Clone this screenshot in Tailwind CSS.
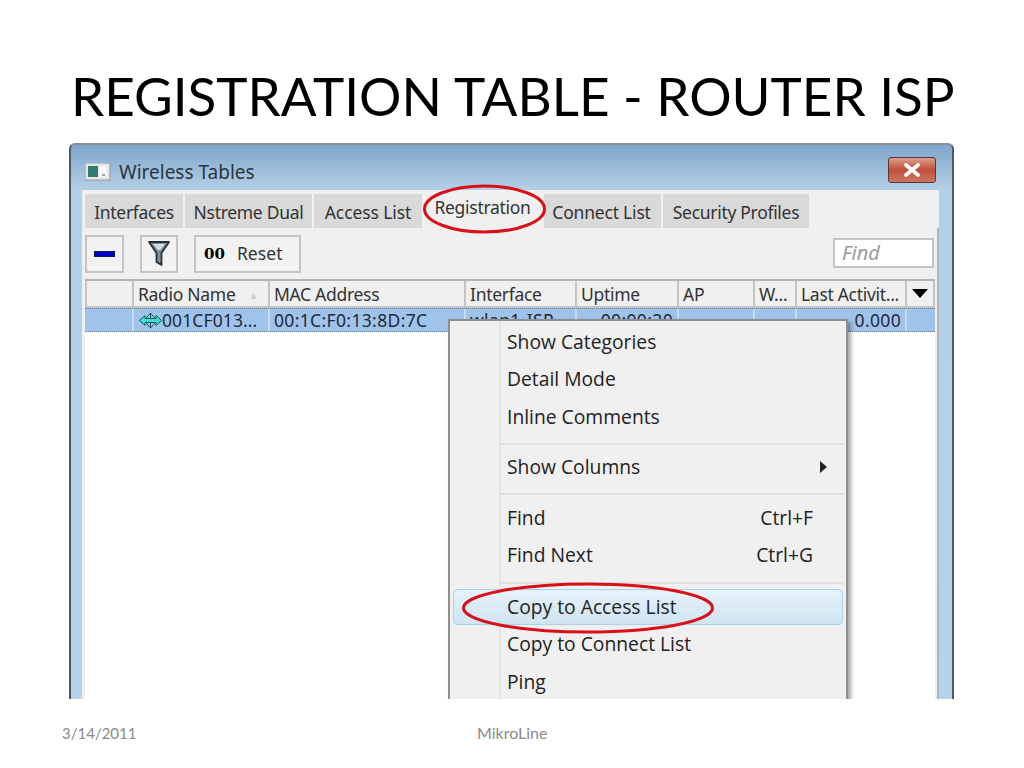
<!DOCTYPE html>
<html>
<head>
  <title>Registration Table - Router ISP</title>
  <script src="https://cdn.jsdelivr.net/npm/@tailwindcss/browser@4"></script>
</head>
<body class="bg-white">
<div class="relative w-[1024px] h-[768px] overflow-hidden bg-white font-['Noto_Sans',sans-serif]">

  <!-- slide title -->
  <h1 class="h-[143px] pl-[71px] pt-[61px] font-['Lato',sans-serif] text-[53px] leading-[70px] text-black whitespace-nowrap">REGISTRATION TABLE - ROUTER ISP</h1>

  <!-- window -->
  <div class="relative ml-[69px] w-[885px] h-[556px] overflow-hidden rounded-t-[6px] border-x-2 border-t-2 border-x-[#4a5a66] border-t-[#8a8f94] bg-gradient-to-b from-[#7fa6ca] via-[#b4d0e7] via-[45px] to-[#b5d2ea] px-[11px]">
    <div class="flex h-[45px] items-center pl-[3px] pt-[9px]">
      <svg width="26" height="18" viewBox="0 0 26 18" class="mr-[8px]">
        <rect x="0" y="0" width="25" height="17" fill="#e6e6e6" stroke="#9a9a9a"/>
        <rect x="3" y="3" width="10" height="11" fill="#2f7c70"/>
        <rect x="14" y="3" width="8" height="11" fill="#f7f7f7"/>
        <rect x="17" y="11" width="3" height="2" fill="#a0a0a0"/>
      </svg>
      <span class="text-[19px] leading-none text-[#2a3640]">Wireless Tables</span>
      <div class="ml-auto mr-[5px] mt-[-4px] flex h-[26px] w-[48px] items-center justify-center rounded-[3px] border border-[#5a3a38] bg-gradient-to-b from-[#dd9b8d] via-[#c2503c] to-[#cf7464]">
        <svg width="20" height="14" viewBox="0 0 20 14"><path d="M4 2 L16 12 M16 2 L4 12" stroke="#fff" stroke-width="3.6" stroke-linecap="round"/></svg>
      </div>
    </div>

    <!-- tabs -->
    <div class="mr-[2px] flex h-[38px] items-end bg-[#f0f0f0] pl-[3px] text-[17.5px] leading-none text-[#333]">
      <div class="mr-[2px] flex h-[34px] w-[98px] items-center justify-center bg-[#d9d9d9] pt-[3px] tracking-[-0.3px]">Interfaces</div>
      <div class="mr-[2px] flex h-[34px] w-[127px] items-center justify-center bg-[#d9d9d9] pt-[3px] tracking-[-0.3px]">Nstreme Dual</div>
      <div class="flex h-[34px] w-[108px] items-center justify-center bg-[#d9d9d9] pt-[3px] tracking-[-0.1px]">Access List</div>
      <div class="flex h-[38px] w-[121px] items-start justify-center bg-[#f0f0f0] pt-[9px] tracking-[-0.3px]">Registration</div>
      <div class="ml-[1px] mr-[2px] flex h-[34px] w-[117px] items-center justify-center bg-[#d9d9d9] pt-[3px] pr-[2px] tracking-[-0.2px]">Connect List</div>
      <div class="flex h-[34px] w-[146px] items-center justify-center bg-[#d9d9d9] pt-[3px] tracking-[-0.3px]">Security Profiles</div>
    </div>

    <!-- panel -->
    <div class="h-[471px] w-[857px] border-r-2 border-[#b5b5b5] bg-[#f0f0f0] pl-[3px]">
      <div class="flex h-[51px] items-start pt-[7px]">
        <div class="flex h-[38px] w-[39px] items-center justify-center border-2 border-[#c4c4c4] bg-[#f2f2f2]">
          <div class="h-[6px] w-[21px] border border-[#001a70] bg-[#0000c8]"></div>
        </div>
        <div class="ml-[16px] flex h-[38px] w-[38px] items-center justify-center border-2 border-[#c4c4c4] bg-[#f2f2f2]">
          <svg width="22" height="28" viewBox="0 0 22 28"><path d="M1 2 H21 L13.500 13 V25 L8.500 22 V13 Z" fill="#7e8f9c" stroke="#2a2f33" stroke-width="1.800" stroke-linejoin="round"/><path d="M5 4 H17 L12 10 H10 Z" fill="#d4dde3"/></svg>
        </div>
        <div class="ml-[16px] flex h-[38px] w-[107px] items-center border-2 border-[#c4c4c4] bg-[#f2f2f2] pl-[8px] text-[17.5px] leading-none text-[#333]">
          <span class="mr-[12px] font-['DejaVu_Serif',serif] text-[15px] font-bold text-black">00</span><span class="tracking-[0.1px]">Reset</span>
        </div>
        <div class="ml-auto mr-[3px] mt-[3px] flex h-[30px] w-[101px] items-center border-2 border-[#c4c4c4] bg-white pl-[7px] text-[20px] italic leading-none text-[#9a9a9a]">Find</div>
      </div>

      <!-- table -->
      <div class="h-[420px] w-[850px] bg-white text-[17.5px] leading-none text-[#333]">
        <div class="grid h-[29px] grid-cols-[49px_136px_196px_111px_102px_76px_42px_110px_28px] border-t-2 border-[#b4b4b4] bg-[#f0f0f0] tracking-[-0.3px]">
          <div class="border-x-2 border-b-2 border-[#c4c4c4]"></div>
          <div class="flex items-center border-r-2 border-b-2 border-[#c4c4c4] pl-[4px] pt-[3px]">Radio Name<span class="ml-[13px] text-[10px] text-[#cfcfcf]">▲</span></div>
          <div class="flex items-center border-r-2 border-b-2 border-[#c4c4c4] pl-[4px] pt-[3px]">MAC Address</div>
          <div class="flex items-center border-r-2 border-b-2 border-[#c4c4c4] pl-[4px] pt-[3px]">Interface</div>
          <div class="flex items-center border-r-2 border-b-2 border-[#c4c4c4] pl-[4px] pt-[3px]">Uptime</div>
          <div class="flex items-center border-r-2 border-b-2 border-[#c4c4c4] pl-[4px] pt-[3px]">AP</div>
          <div class="flex items-center border-r-2 border-b-2 border-[#c4c4c4] pl-[4px] pt-[3px]">W...</div>
          <div class="flex items-center border-r-2 border-b-2 border-[#c4c4c4] pl-[4px] pt-[3px] whitespace-nowrap">Last Activit...</div>
          <div class="flex items-center justify-center border-r-2 border-b-2 border-[#c4c4c4]">
            <svg width="16" height="9" viewBox="0 0 16 9"><path d="M0 0 H16 L8 9 Z" fill="#000"/></svg>
          </div>
        </div>
        <div class="grid h-[24px] grid-cols-[49px_136px_196px_111px_102px_76px_42px_110px_28px] border-y border-dotted border-[#6a7f96] bg-[#9fc3ea] tracking-[0.35px] text-[#1f2a38]">
          <div class="border-r-2 border-[#c7dcf2]"></div>
          <div class="flex items-center border-r-2 border-[#c7dcf2] pl-[5px] pt-[1px] whitespace-nowrap">
            <svg width="23" height="17" viewBox="0 0 23 17" class="shrink-0"><path d="M11.500 1 L18 8.500 L11.500 16 L5 8.500 Z M11.500 1 V16" fill="none" stroke="#145a5a" stroke-width="1"/><path d="M0.500 8.500 L6 3.500 V6.500 H17 V3.500 L22.500 8.500 L17 13.500 V10.500 H6 V13.500 Z" fill="#3fe0d8" stroke="#145a5a" stroke-width="1"/></svg><span class="tracking-[0.1px]">001CF013...</span>
          </div>
          <div class="flex items-center border-r-2 border-[#c7dcf2] pl-[4px] pt-[1px]">00:1C:F0:13:8D:7C</div>
          <div class="flex items-center border-r-2 border-[#c7dcf2] pl-[4px] pt-[1px]">wlan1-ISP</div>
          <div class="flex items-center justify-end border-r-2 border-[#c7dcf2] pr-[4px] pt-[1px]">00:00:20</div>
          <div class="border-r-2 border-[#c7dcf2]"></div>
          <div class="border-r-2 border-[#c7dcf2]"></div>
          <div class="flex items-center justify-end border-r-2 border-[#c7dcf2] pr-[4px] pt-[1px]">0.000</div>
          <div></div>
        </div>
      </div>
    </div>

    <!-- context menu -->
    <div class="absolute left-[377px] top-[174px] h-[400px] w-[400px] border-2 border-[#8f8f8f] bg-[#f0f0f0] font-['Open_Sans',sans-serif] text-[19.3px] leading-none text-[#222] shadow-[3px_3px_4px_rgba(0,0,0,0.35)]">
      <div class="absolute bottom-0 left-[49px] top-0 w-[2px] bg-[#e2e3e3]"></div>
      <div class="relative pl-[57px] pt-[2px]">
        <div class="flex h-[37px] items-center">Show Categories</div>
        <div class="flex h-[38px] items-center">Detail Mode</div>
        <div class="flex h-[37px] items-center">Inline Comments</div>
        <div class="ml-[-6px] mr-[3px] mt-[8px] mb-[5px] h-[2px] bg-[#e0e0e0]"></div>
        <div class="flex h-[33px] items-center justify-between pr-[19px]">Show Columns
          <svg width="7" height="12" viewBox="0 0 7 12"><path d="M0 0 L7 6 L0 12 Z" fill="#222"/></svg>
        </div>
        <div class="ml-[-6px] mr-[3px] mt-[10px] mb-[4px] h-[2px] bg-[#e0e0e0]"></div>
        <div class="flex h-[37px] items-center justify-between pr-[33px]">Find<span>Ctrl+F</span></div>
        <div class="flex h-[37px] items-center justify-between pr-[33px]">Find Next<span>Ctrl+G</span></div>
        <div class="ml-[-6px] mr-[3px] mt-[9px] mb-[5px] h-[2px] bg-[#e0e0e0]"></div>
        <div class="ml-[-54px] mr-[3px] flex h-[36px] items-center rounded-[4px] border border-[#a9d3ea] bg-gradient-to-b from-[#e6f2f9] to-[#cfe4f2] pl-[53px]">Copy to Access List</div>
        <div class="flex h-[38px] items-center">Copy to Connect List</div>
        <div class="flex h-[38px] items-center">Ping</div>
      </div>
    </div>
  </div>

  <!-- red marks drawn on the slide -->
  <svg class="absolute left-[420px] top-[180px]" width="130" height="56" viewBox="0 0 130 56"><ellipse cx="64.500" cy="29" rx="60" ry="23" fill="none" stroke="#d90f1a" stroke-width="3"/></svg>
  <svg class="absolute left-[460px] top-[580px]" width="256" height="56" viewBox="0 0 256 56"><ellipse cx="128" cy="28" rx="124.500" ry="24" fill="none" stroke="#d90f1a" stroke-width="3"/></svg>

  <!-- footer -->
  <div class="relative h-[69px] font-['Lato',sans-serif] text-[#8b8b8b]">
    <span class="absolute left-[62px] top-[23px] text-[15px]">3/14/2011</span>
    <span class="absolute left-[477px] top-[22px] text-[16px]">MikroLine</span>
  </div>
</div>
</body>
</html>
